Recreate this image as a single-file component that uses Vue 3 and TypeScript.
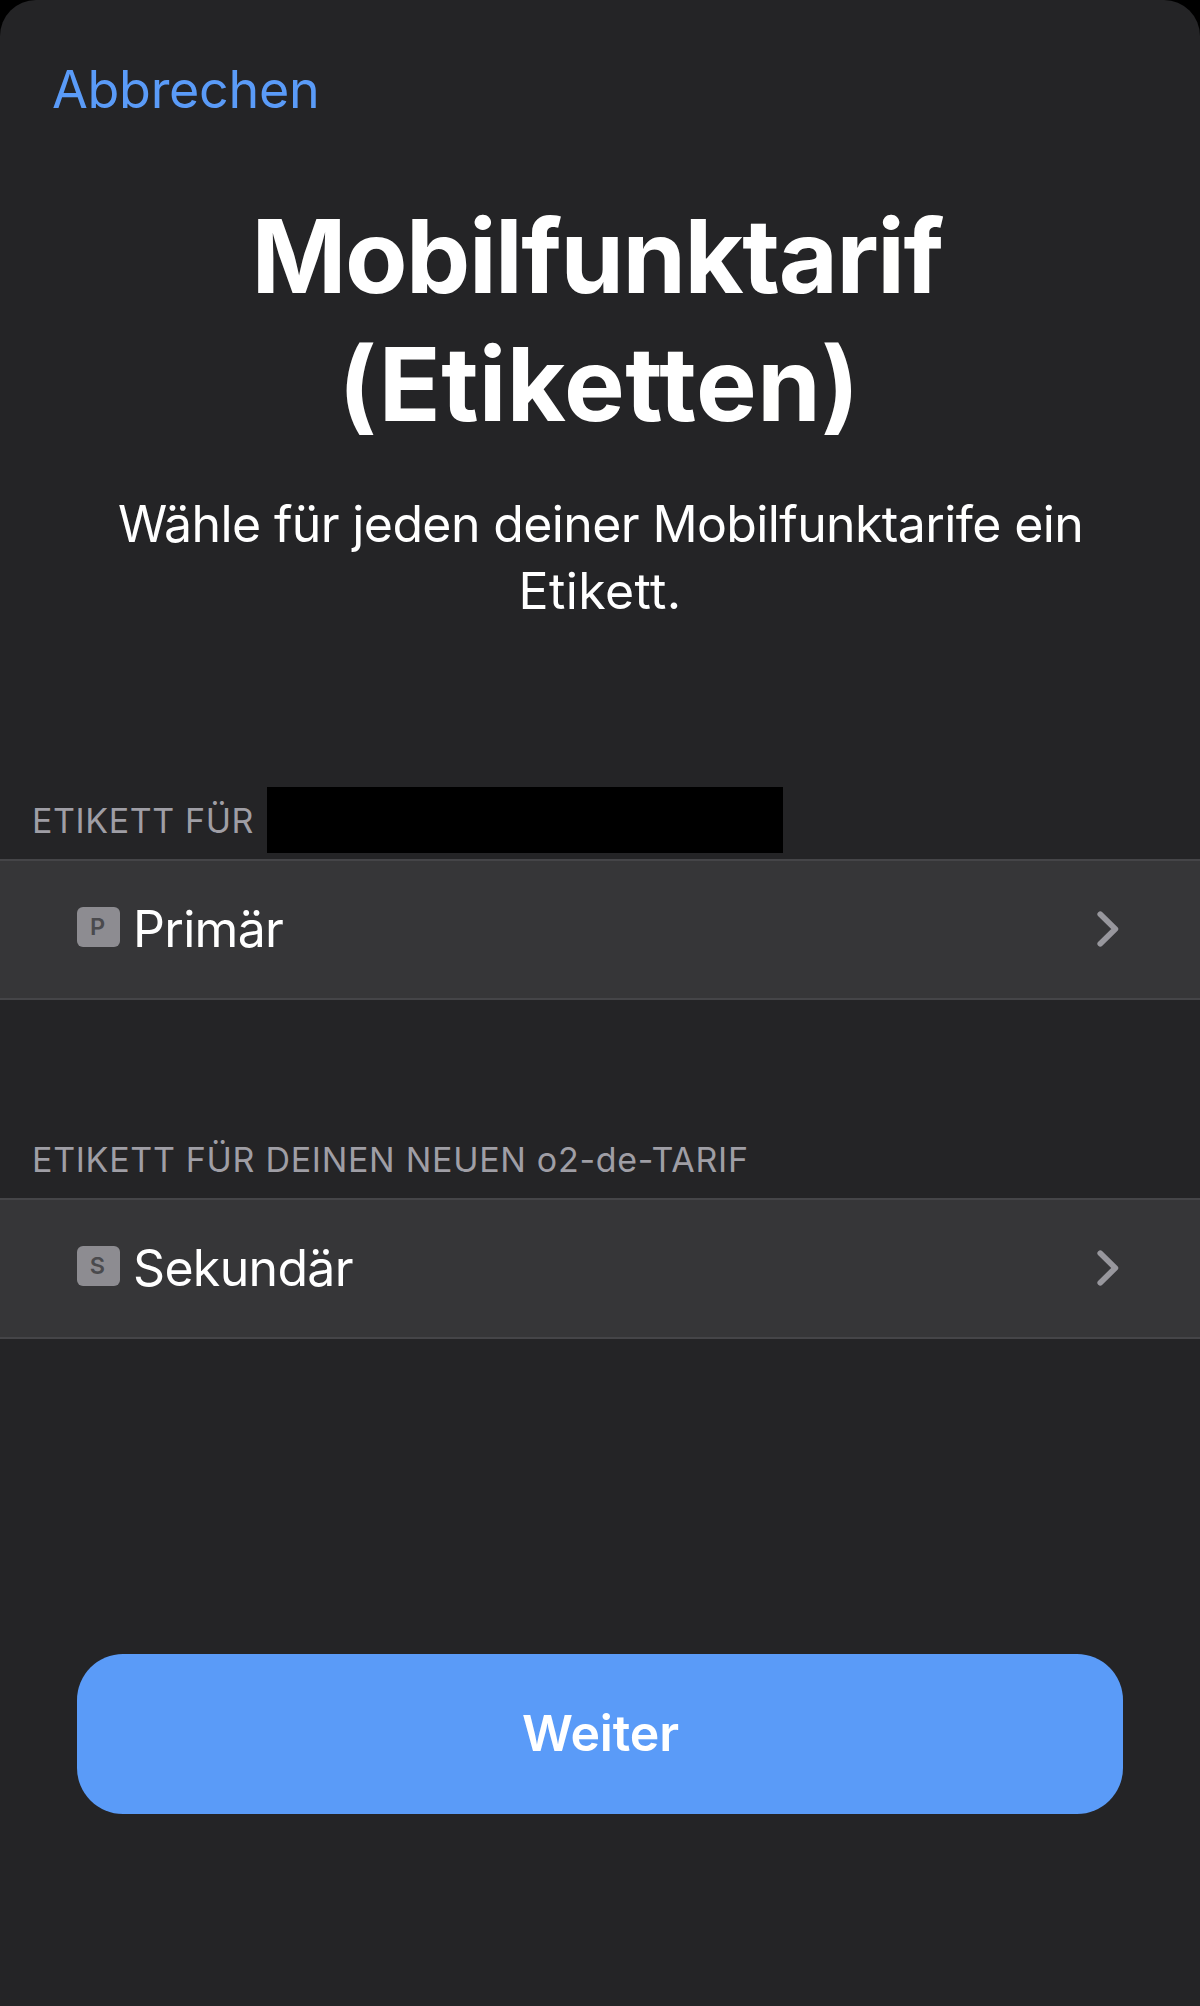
<script setup lang="ts">
interface Section {
  id: string
  label: string
  redacted: boolean
  badge: string
  value: string
}

const sections: Section[] = [
  { id: 'primary', label: 'ETIKETT FÜR', redacted: true, badge: 'P', value: 'Primär' },
  { id: 'secondary', label: 'ETIKETT FÜR DEINEN NEUEN o2-de-TARIF', redacted: false, badge: 'S', value: 'Sekundär' },
]
</script>

<template>
  <main class="sheet">
    <nav class="nav"><a class="cancel">Abbrechen</a></nav>

    <header class="intro">
      <h1 class="title">
        <span class="title-first">Mobilfunktarif</span>
        <span class="title-second">(Etiketten)</span>
      </h1>
      <p class="subtitle">
        <span class="subtitle-first">Wähle für jeden deiner Mobilfunktarife ein</span>
        <span class="subtitle-second">Etikett.</span>
      </p>
    </header>

    <div class="sections">
      <section v-for="s in sections" :key="s.id" :class="s.id">
        <div class="label">
          <span class="label-text">{{ s.label }}</span>
          <span v-if="s.redacted" class="redaction"></span>
        </div>
        <div class="row">
          <span class="badge">{{ s.badge }}</span>
          <span class="value">{{ s.value }}</span>
          <svg class="chevron" width="22" height="36" viewBox="0 0 22 36" fill="none">
            <path d="M3.3 3.3 L18.3 18 L3.3 32.7" stroke="currentColor" stroke-width="5.8" stroke-linecap="round" stroke-linejoin="round" />
          </svg>
        </div>
      </section>
    </div>

    <button class="continue" type="button">Weiter</button>
  </main>
</template>

<style>
body {
  margin: 0;
  background: #000;
}
</style>

<style scoped>
.sheet {
  box-sizing: border-box;
  width: 1200px;
  height: 2006px;
  padding-top: 58px;
  overflow: hidden;
  display: flex;
  flex-direction: column;
  background: #242426;
  border-radius: 36px 36px 0 0;
  color: #fff;
  font-family: Inter, "Liberation Sans", sans-serif;
}

.nav {
  height: 64px;
  padding-left: 52px;
  font-size: 52px;
  line-height: 64px;
  letter-spacing: -0.3px;
}

.cancel {
  color: #5a9bf8;
}

.intro {
  margin-top: 70px;
  text-align: center;
}

.title,
.subtitle {
  margin: 0;
  display: flex;
  flex-direction: column;
}

.title {
  font-size: 102px;
  font-weight: 700;
  line-height: 128px;
}

.title-first {
  padding-right: 6px;
  letter-spacing: -1.45px;
}

.title-second {
  padding-right: 2px;
  letter-spacing: 0.36px;
}

.subtitle {
  margin-top: 43px;
  font-size: 50px;
  font-weight: 400;
  line-height: 67px;
}

.subtitle-first {
  padding-left: 1px;
  letter-spacing: -0.62px;
}

.subtitle-second {
  letter-spacing: 0.39px;
}

.sections {
  display: flex;
  flex-direction: column;
  gap: 126px;
  margin-top: 162px;
}

.label {
  height: 72px;
  padding-left: 32px;
  display: flex;
  align-items: flex-start;
  font-size: 34px;
  line-height: 68px;
  color: #9f9ea5;
}

.label-text {
  letter-spacing: 0.7px;
  white-space: nowrap;
}

.primary .label-text {
  width: 235px;
  letter-spacing: 0.6px;
}

.redaction {
  width: 515.5px;
  height: 65.5px;
  background: #000;
}

.row {
  box-sizing: border-box;
  height: 141px;
  padding: 0 81px 0 77px;
  display: flex;
  align-items: flex-start;
  background: #363638;
  border-top: 2px solid #454548;
  border-bottom: 2px solid #454548;
}

.badge {
  box-sizing: border-box;
  width: 43px;
  height: 40px;
  margin-top: 46px;
  padding-right: 2px;
  border-radius: 6px;
  background: #8d8c91;
  color: #4a4a4d;
  font-size: 23.5px;
  font-weight: 600;
  line-height: 40px;
  text-align: center;
}

.value {
  margin-left: 13px;
  font-size: 50px;
  line-height: 136px;
  letter-spacing: -0.68px;
}

.chevron {
  margin-top: 50px;
  margin-left: auto;
  color: #98979d;
}

.continue {
  height: 160px;
  margin: 315px 77px 0;
  padding: 0 0 2px 1px;
  border: 0;
  border-radius: 46px;
  background: #5a9bf8;
  color: #fff;
  font: 600 50px/158px Inter, "Liberation Sans", sans-serif;
  letter-spacing: -0.15px;
}
</style>
